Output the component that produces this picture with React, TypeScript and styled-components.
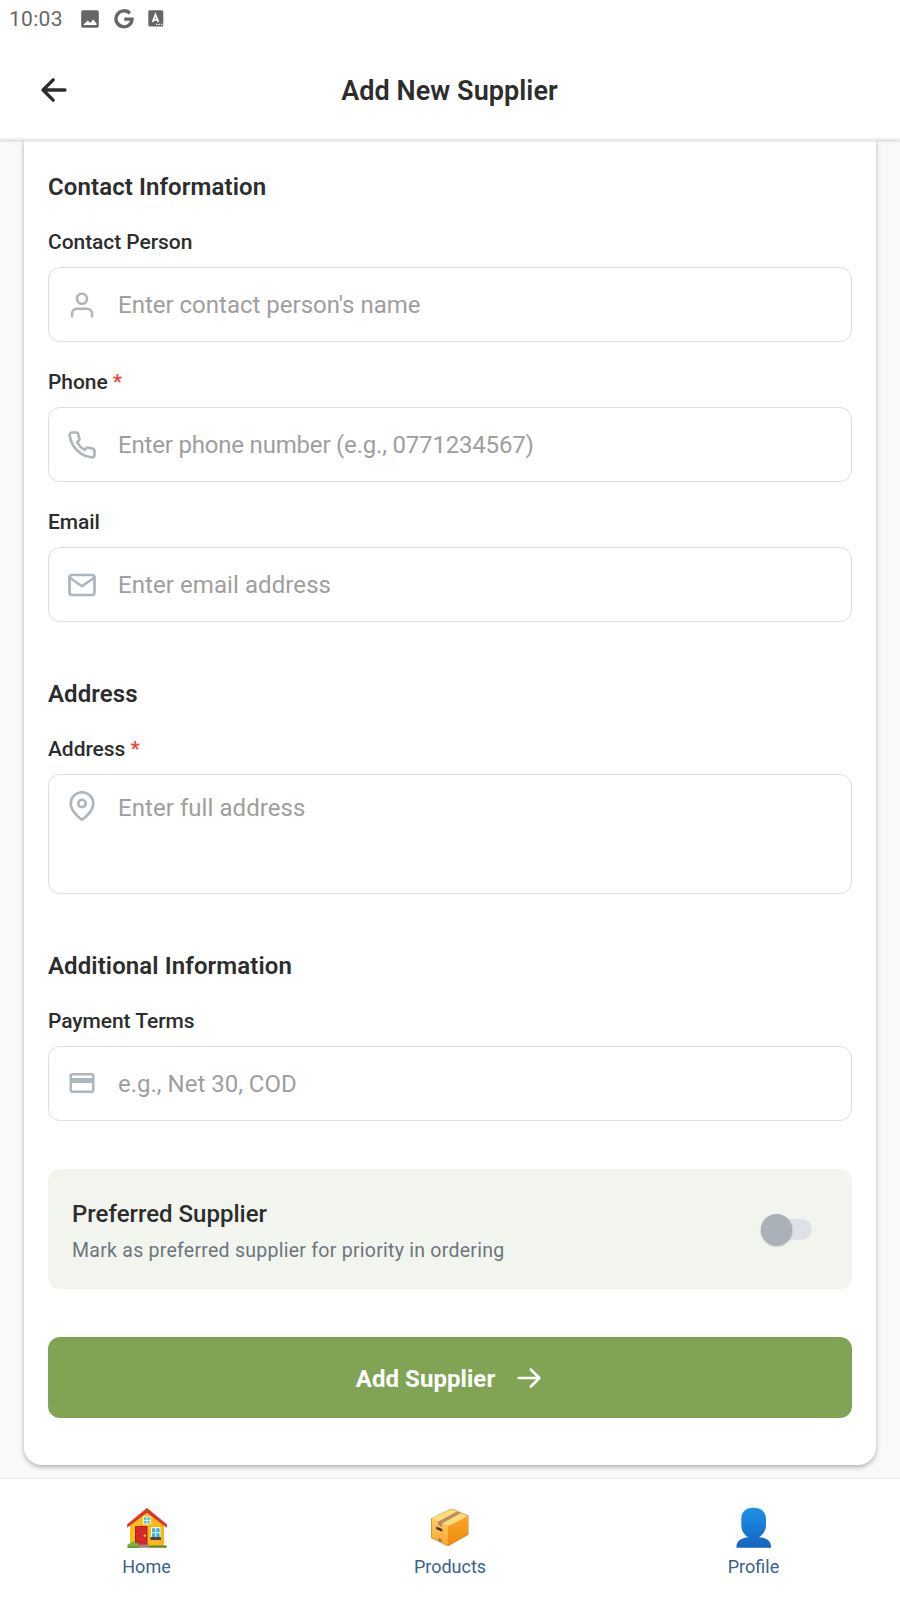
import React from 'react';
import styled, { createGlobalStyle } from 'styled-components';
import { FiUser, FiPhone, FiMail, FiMapPin } from 'react-icons/fi';
import { MdCreditCard } from 'react-icons/md';

const GlobalStyle = createGlobalStyle`
  * { box-sizing: border-box; }
  body {
    margin: 0;
    background: #f8f9fb;
    color: #2d2d2d;
    font-family: Roboto, "Noto Sans", sans-serif;
  }
`;

const Screen = styled.div`
  display: flex;
  flex-direction: column;
  width: 900px;
  height: 1600px;
  overflow: hidden;
  background: #f8f9fb;
`;

const StatusBar = styled.div`
  display: flex;
  align-items: center;
  height: 37px;
  padding-left: 9px;
  color: #666;
  font-size: 21px;
  letter-spacing: 0.3px;
  svg { display: block; }
`;

const StatusIcons = styled.div`
  display: flex;
  align-items: center;
  gap: 14.5px;
  margin-left: 18.4px;
`;

const TopArea = styled.header`
  position: relative;
  z-index: 1;
  flex: none;
  height: 140px;
  background: #fff;
  border-bottom: 2px solid #f1f1f1;
  box-shadow: 0 1px 2px rgba(0, 0, 0, 0.16);
`;

const TitleBar = styled.div`
  display: grid;
  grid-template-columns: 36px 1fr 36px;
  align-items: center;
  height: 101px;
  padding: 5px 36px 0;
`;

const BackButton = styled.button`
  display: flex;
  padding: 0 0 1px;
  border: 0;
  background: none;
  color: #2d2d2d;
`;

const PageTitle = styled.h1`
  margin: 0;
  padding: 2px 1px 0 0;
  font-size: 27px;
  line-height: 36px;
  font-weight: 600;
  letter-spacing: 0.06px;
  text-align: center;
`;

const Content = styled.main`
  flex: 1;
  min-height: 0;
  padding: 0 24px;
`;

const Card = styled.form`
  display: flex;
  flex-direction: column;
  height: 1325px;
  padding: 31px 24px 0;
  border-radius: 0 0 18px 18px;
  background: #fff;
  box-shadow: 0 2px 5px rgba(0, 0, 0, 0.3);
`;

const Section = styled.section`
  & + & { margin-top: 56px; }
`;

const SectionTitle = styled.h2`
  margin: 0 0 25px;
  font-size: 24px;
  line-height: 32px;
  font-weight: 600;
  letter-spacing: 0.1px;
`;

const FieldGroup = styled.div`
  & + & { margin-top: 26px; }
`;

const Label = styled.label`
  display: block;
  margin-bottom: 11px;
  font-size: 21px;
  line-height: 28px;
  font-weight: 500;
  letter-spacing: -0.06px;
`;

const Required = styled.span`
  color: #f04438;
`;

const InputBox = styled.div<{ $tall?: boolean }>`
  display: flex;
  align-items: ${p => (p.$tall ? 'flex-start' : 'center')};
  gap: 21px;
  height: ${p => (p.$tall ? 120 : 75)}px;
  padding: ${p => (p.$tall ? '15px 18px 0' : '0 18px')};
  border: 1px solid #dadde3;
  border-radius: 12px;
  color: #adb5bd;
  svg {
    flex: none;
    margin-top: ${p => (p.$tall ? 1 : 0)}px;
  }
`;

const TextInput = styled.input<{ $tracking: number }>`
  flex: 1;
  height: 36px;
  padding: 0;
  border: 0;
  outline: 0;
  background: none;
  color: #2d2d2d;
  font: 400 24px/36px Roboto, sans-serif;
  letter-spacing: ${p => p.$tracking}px;
  &::placeholder { color: #9e9e9e; opacity: 1; }
`;

const CardIcon = styled(MdCreditCard)`
  position: relative;
  top: -1px;
`;

const Preferred = styled.div`
  display: flex;
  align-items: center;
  justify-content: space-between;
  height: 120px;
  margin-top: 48px;
  padding: 0 39px 0 24px;
  border-radius: 12px;
  background: #f2f5ee;
`;

const PreferredText = styled.div`
  padding-top: 6px;
`;

const PreferredTitle = styled.div`
  font-size: 24px;
  line-height: 36px;
  font-weight: 500;
`;

const PreferredHint = styled.div`
  font-size: 19.5px;
  line-height: 37px;
  color: #6c757d;
  letter-spacing: 0.26px;
`;

const SwitchTrack = styled.div`
  display: flex;
  align-items: center;
  width: 47px;
  height: 21px;
  margin-right: 1px;
  border-radius: 11px;
  background: #dee1e6;
`;

const SwitchThumb = styled.div`
  width: 31px;
  height: 31px;
  margin-left: -4px;
  border-radius: 50%;
  background: #aab1b9;
  box-shadow: 0 1px 2px rgba(0, 0, 0, 0.35);
`;

const SubmitButton = styled.button`
  display: flex;
  align-items: center;
  justify-content: center;
  gap: 19px;
  height: 81px;
  margin-top: 48px;
  padding: 2px 0 0;
  border: 0;
  border-radius: 12px;
  background: #80a453;
  color: #fff;
  font: 700 24px/32px Roboto, sans-serif;
  letter-spacing: 0.06px;
`;

const TabBar = styled.nav`
  position: relative;
  z-index: 1;
  display: grid;
  grid-template-columns: repeat(3, 1fr);
  flex: none;
  height: 122px;
  padding: 0 -2px;
  border-top: 1px solid #e9ebee;
  background: #fff;
`;

const Tab = styled.a<{ $shift?: number }>`
  display: flex;
  flex-direction: column;
  align-items: center;
  gap: 6px;
  padding-top: 28px;
  padding-left: ${p => Math.max(p.$shift ?? 0, 0)}px;
  padding-right: ${p => Math.max(-(p.$shift ?? 0), 0)}px;
  color: #38628f;
  font-size: 18px;
  line-height: 24px;
`;

const ImageIcon = () => (
  <svg width="18" height="18" viewBox="0 0 18 18">
    <path fill="#666" fillRule="evenodd" d="M2 0.3h14a1.8 1.8 0 0 1 1.8 1.8v13.8a1.8 1.8 0 0 1-1.8 1.8H2a1.8 1.8 0 0 1-1.8-1.8V2.100A1.800 1.800 0 0 1 2 .3ZM2.500 15h13v-1.600l-3.300-4-3 3.600-2.400-2.400-4.300 3.800Z" />
  </svg>
);

const GoogleIcon = () => (
  <svg width="20" height="20" viewBox="0 0 20 20" fill="none" stroke="#666" strokeWidth="3.400">
    <path d="M15.900 4.400A8 8 0 1 0 18 10.100H10.200" />
  </svg>
);

const LetterIcon = () => (
  <svg width="16" height="17" viewBox="0 0 16 17">
    <rect x=".3" y=".3" width="15" height="16.200" rx="1.500" fill="#666" />
    <path d="M4.600 12 7.500 4.700 10.400 12M5.600 9.800h3.800" fill="none" stroke="#fff" strokeWidth="1.800" />
    <path d="M8 14.400h1.400M10.500 14.400h1.400M13 14.400h1.400" stroke="#fff" strokeWidth="1.300" />
  </svg>
);

const BackArrow = () => (
  <svg width="36" height="36" viewBox="0 0 512 512" fill="none" stroke="currentColor" strokeWidth="48" strokeLinecap="round" strokeLinejoin="round">
    <path d="M244 400 100 256 244 112M120 256h292" />
  </svg>
);

const ForwardArrow = () => (
  <svg width="30" height="30" viewBox="0 0 30 30" fill="none" stroke="currentColor" strokeWidth="2.500" strokeLinecap="round" strokeLinejoin="round">
    <path d="M4.500 14h20.800M16.800 5.500l8.600 8.500-8.600 8.500" />
  </svg>
);

const HouseIcon = () => (
  <svg width="42" height="42" viewBox="0 0 42 42">
    <defs>
      <linearGradient id="wall" x1="0" y1="0" x2="1" y2="0">
        <stop offset="0" stopColor="#fcc21b" />
        <stop offset="1" stopColor="#f9b316" />
      </linearGradient>
    </defs>
    <path d="M4 18 21 3l17 15v21.500H4Z" fill="url(#wall)" />
    <path d="M21 1 1.200 17.200v3L21 5l19.800 15.200v-3Z" fill="#e5322d" />
    <path d="M1.200 20.200 21 5l19.800 15.200" fill="none" stroke="#b92321" strokeWidth=".8" />
    <rect x="9" y="19" width="12.500" height="19" fill="#b71c1c" />
    <rect x="10.300" y="20.200" width="10" height="17.600" fill="#d92b2b" />
    <path d="M12 22h6.500v5H12zM12 29h6.500v6H12z" fill="none" stroke="#c62828" />
    <circle cx="18.900" cy="28.500" r="1.200" fill="#fbc02d" />
    <rect x="17" y="9.300" width="7.800" height="8" fill="#fff3d0" />
    <path d="M17.900 10.300h2.600v2.600h-2.600zM21.300 10.300h2.600v2.600h-2.600zM17.900 13.800h2.600v2.600h-2.600zM21.300 13.800h2.600v2.600h-2.600z" fill="#4fc3f7" />
    <rect x="25" y="20" width="9.600" height="11" fill="#fff3d0" />
    <path d="M26 21.200h3.300v4H26zM30.300 21.200h3.300v4h-3.300zM26 26.200h3.300v4H26zM30.300 26.200h3.300v4h-3.300z" fill="#29b6f6" />
    <rect x="24.500" y="30" width="10.500" height="3" rx=".6" fill="#5d4037" />
    <path d="M13 37.500h10v3.300H13Z" fill="#a1887f" />
    <path d="M1.300 40.800c-.5-2.500.8-4.600 3-4.300 1-2.400 4-2.600 5.300-.6 2.200-.3 3.400 1.600 3.600 4.900Z" fill="#7cb342" />
    <path d="M23 38.500h17.700v2.300H23ZM2 39.600h11v1.200H2Z" fill="#558b2f" />
  </svg>
);

const PackageIcon = () => (
  <svg width="42" height="42" viewBox="0 0 42 42">
    <defs>
      <linearGradient id="side" x1="0" y1="0" x2="0" y2="1">
        <stop offset="0" stopColor="#fba62b" />
        <stop offset="1" stopColor="#ef8a0a" />
      </linearGradient>
      <linearGradient id="front" x1="0" y1="0" x2="0" y2="1">
        <stop offset="0" stopColor="#ffc861" />
        <stop offset="1" stopColor="#fba92e" />
      </linearGradient>
    </defs>
    <path d="M2 11.500 22.500 1.500l17 6.900v19.300L19 39.300 2 31Z" fill="#c98427" />
    <path d="M2.700 11.800 19 19.500v19L2.700 30.500Z" fill="url(#front)" />
    <path d="M19 19.500 39 9v18.300L19 38.500Z" fill="url(#side)" />
    <path d="M2.500 11.500 22.500 2 39 8.900 19 19.500Z" fill="#ffdc7a" />
    <path d="m9 14.700 19-10.100 4 1.500L13 16.500V20l-4-2.100Z" fill="#bd8a66" />
    <path d="m7.300 19.500 6 2.400v2.800l-6-2.400Z" fill="#493526" />
    <path d="m9.300 30.500 3.500 1.800v3.200l-3.500-2Z" fill="#b77b4d" />
  </svg>
);

const ProfileIcon = () => (
  <svg width="42" height="42" viewBox="0 0 42 42">
    <defs>
      <linearGradient id="bust" x1="0" y1="0" x2="0" y2="1">
        <stop offset="0" stopColor="#1e90e8" />
        <stop offset="1" stopColor="#1565c0" />
      </linearGradient>
    </defs>
    <path d="M20.500.8C29 .8 33 5.500 33 12v6c0 6-3.500 10-7 12.200 7 .5 12 3.800 12 9.300v1.300H3.500v-1.300c0-5.500 5-8.800 11.700-9.300C11.500 28 8.300 24 8.300 18v-6C8.300 5.500 12 .8 20.500.8Z" fill="url(#bust)" />
  </svg>
);

type FieldProps = {
  label: string;
  placeholder: string;
  icon: React.ReactNode;
  required?: boolean;
  tall?: boolean;
  tracking?: number;
};

const Field = ({ label, placeholder, icon, required, tall, tracking = 0 }: FieldProps) => (
  <FieldGroup>
    <Label>
      {label}
      {required && <Required> *</Required>}
    </Label>
    <InputBox $tall={tall}>
      {icon}
      <TextInput placeholder={placeholder} $tracking={tracking} />
    </InputBox>
  </FieldGroup>
);

export default function App() {
  return (
    <Screen>
      <GlobalStyle />
      <TopArea>
        <StatusBar>
          10:03
          <StatusIcons>
            <ImageIcon />
            <GoogleIcon />
            <LetterIcon />
          </StatusIcons>
        </StatusBar>
        <TitleBar>
          <BackButton type="button" aria-label="Back">
            <BackArrow />
          </BackButton>
          <PageTitle>Add New Supplier</PageTitle>
        </TitleBar>
      </TopArea>
      <Content>
        <Card>
          <Section>
            <SectionTitle>Contact Information</SectionTitle>
            <Field label="Contact Person" placeholder="Enter contact person's name" icon={<FiUser size={30} strokeWidth={2.15} />} />
            <Field label="Phone" required tracking={-0.19} placeholder="Enter phone number (e.g., 0771234567)" icon={<FiPhone size={30} strokeWidth={2.15} />} />
            <Field label="Email" tracking={0.08} placeholder="Enter email address" icon={<FiMail size={30} strokeWidth={2.15} />} />
          </Section>
          <Section>
            <SectionTitle>Address</SectionTitle>
            <Field label="Address" required tall tracking={0.06} placeholder="Enter full address" icon={<FiMapPin size={30} strokeWidth={2.15} />} />
          </Section>
          <Section>
            <SectionTitle>Additional Information</SectionTitle>
            <Field label="Payment Terms" placeholder="e.g., Net 30, COD" icon={<CardIcon size={30} />} />
          </Section>
          <Preferred>
            <PreferredText>
              <PreferredTitle>Preferred Supplier</PreferredTitle>
              <PreferredHint>Mark as preferred supplier for priority in ordering</PreferredHint>
            </PreferredText>
            <SwitchTrack role="switch" aria-checked={false}>
              <SwitchThumb />
            </SwitchTrack>
          </Preferred>
          <SubmitButton type="button">
            Add Supplier
            <ForwardArrow />
          </SubmitButton>
        </Card>
      </Content>
      <TabBar>
        <Tab $shift={-7}>
          <HouseIcon />
          Home
        </Tab>
        <Tab>
          <PackageIcon />
          Products
        </Tab>
        <Tab $shift={7}>
          <ProfileIcon />
          Profile
        </Tab>
      </TabBar>
    </Screen>
  );
}
